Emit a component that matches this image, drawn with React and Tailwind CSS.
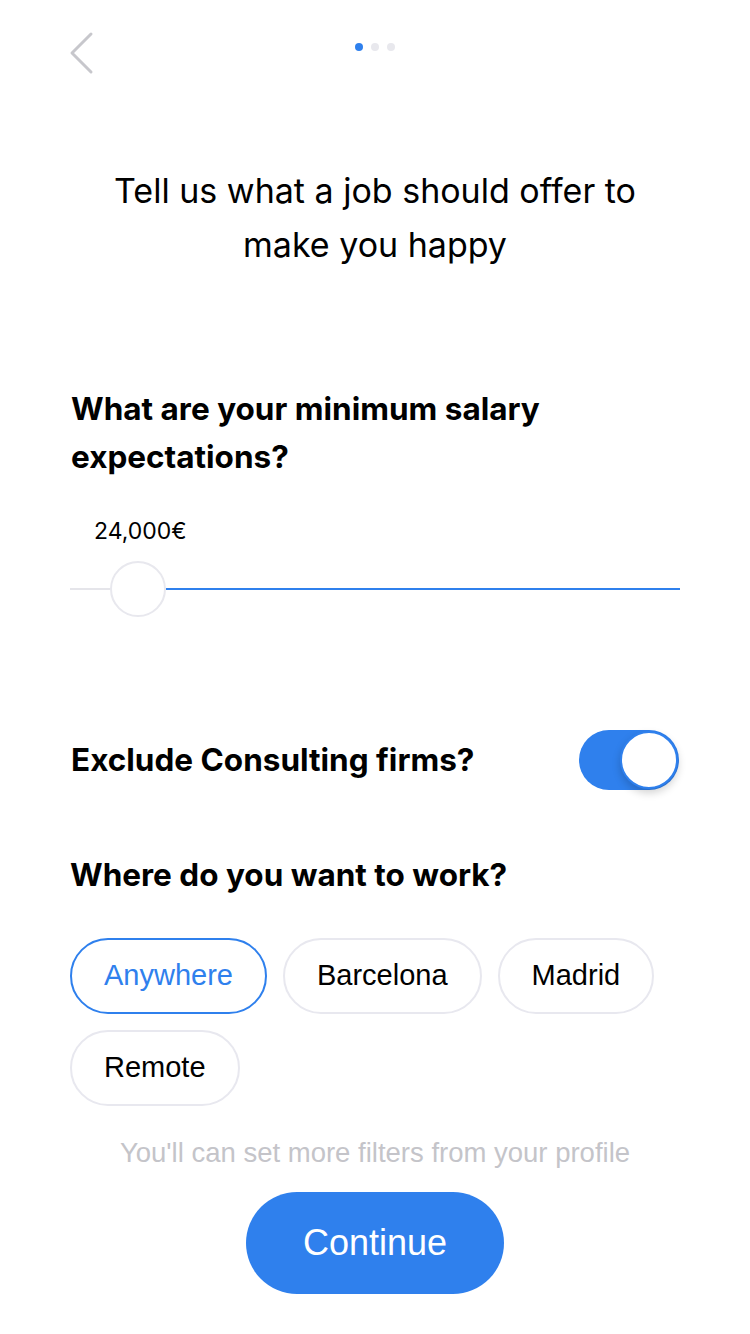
import React, { useState } from 'react';

const locations = ['Anywhere', 'Barcelona', 'Madrid', 'Remote'];

export default function App() {
  const [selected, setSelected] = useState('Anywhere');
  const [exclude, setExclude] = useState(true);

  return (
    <div className="w-[750px] h-[1334px] bg-white font-['Inter',sans-serif] text-black flex flex-col">
      <header className="relative h-[100px] flex justify-center pt-[43px]">
        <button className="absolute left-[66px] top-[30px] w-[30px] h-[46px] flex items-center justify-center">
          <svg width="26" height="44" viewBox="0 0 26 44" fill="none">
            <path d="M23 3 L4 22 L23 41" stroke="#c7c7cc" strokeWidth="3" strokeLinecap="round" strokeLinejoin="round" />
          </svg>
        </button>
        <div className="flex gap-2 h-2">
          <span className="w-2 h-2 rounded-full bg-[#2f80ed]" />
          <span className="w-2 h-2 rounded-full bg-[#e8e8ed]" />
          <span className="w-2 h-2 rounded-full bg-[#e8e8ed]" />
        </div>
      </header>

      <h1 className="mt-[64px] text-center text-[34px] leading-[54px] font-normal">
        Tell us what a job should offer to
        <br />
        make you happy
      </h1>

      <section className="px-[71px] mt-[113px]">
        <h2 className="text-[31.5px] leading-[48px] font-bold">
          What are your minimum salary
          <br />
          expectations?
        </h2>
        <p className="mt-[35px] ml-[23px] text-[23px] leading-[30px]">24,000€</p>
        <div className="mt-[14px] -mx-px relative h-[58px] flex items-center">
          <div className="w-[40px] h-[2px] bg-[#e5e5ea]" />
          <div className="w-[56px] h-[56px] rounded-full border-2 border-[#e8e8ee] bg-white shrink-0" />
          <div className="flex-1 h-[2px] bg-[#2f80ed]" />
        </div>
      </section>

      <section className="px-[71px] mt-[112px] flex items-center justify-between">
        <h2 className="text-[31.5px] leading-[40px] font-bold">Exclude Consulting firms?</h2>
        <button
          onClick={() => setExclude(!exclude)}
          className={`w-[100px] h-[60px] rounded-full flex items-center p-px ${exclude ? 'bg-[#2f80ed] justify-end' : 'bg-[#e5e5ea] justify-start'}`}
        >
          <span className="w-[58px] h-[58px] rounded-full bg-white border-2 border-[#2f80ed] shadow-[0_4px_8px_rgba(0,0,0,0.18)]" />
        </button>
      </section>

      <section className="px-[70px] mt-[65px]">
        <h2 className="text-[31.5px] leading-[40px] font-bold">Where do you want to work?</h2>
        <div className="mt-[43px] flex flex-wrap gap-x-[16px] gap-y-[16px]">
          {locations.map((loc) => (
            <button
              key={loc}
              onClick={() => setSelected(loc)}
              className={`h-[76px] px-[32px] rounded-full border-2 text-[29px] font-['Liberation_Sans',sans-serif] ${
                selected === loc ? 'border-[#2f80ed] text-[#2f80ed]' : 'border-[#e8e8ef] text-black'
              }`}
            >
              {loc}
            </button>
          ))}
        </div>
      </section>

      <p className="mt-[31px] text-center text-[27.5px] leading-[32px] text-[#c4c4c9] font-['Liberation_Sans',sans-serif]">
        You'll can set more filters from your profile
      </p>

      <div className="mt-[23px] flex justify-center">
        <button className="w-[258px] h-[102px] rounded-full bg-[#2f80ed] text-white text-[36px] font-['Liberation_Sans',sans-serif]">
          Continue
        </button>
      </div>
    </div>
  );
}
